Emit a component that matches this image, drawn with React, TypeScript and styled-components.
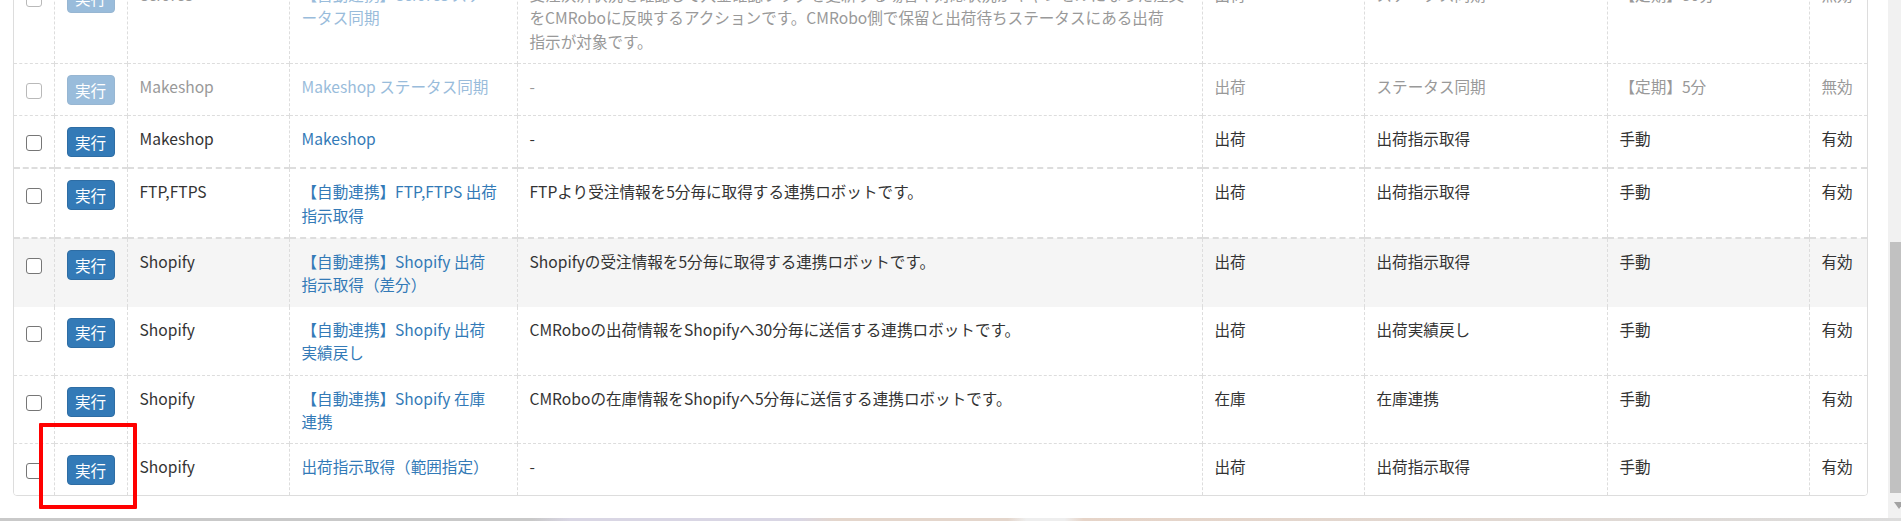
import React from 'react';
import styled, { createGlobalStyle, css } from 'styled-components';

const GlobalStyle = createGlobalStyle`
  html, body {
    margin: 0;
    padding: 0;
    background: #fff;
  }
  body {
    font-family: 'Noto Sans CJK JP', 'Noto Sans', sans-serif;
    color: #333;
  }
`;

const Screen = styled.div`
  position: relative;
  width: 1901px;
  height: 521px;
  display: flex;
  flex-direction: column;
  overflow: hidden;
`;

const Body = styled.div`
  display: flex;
  height: 518px;
`;

const Main = styled.main`
  flex: 1;
  min-width: 0;
  overflow: hidden;
  padding: 0 20px 0 13px;
`;

// the page is scrolled, so the first row is partly above the viewport
const Panel = styled.div`
  margin-top: -29px;
  border: 1px solid #ddd;
  border-radius: 4px;
  overflow: hidden;
  background: #fff;
`;

const Table = styled.table`
  width: 100%;
  table-layout: fixed;
  border-collapse: collapse;
  font-size: 15.6px;
  line-height: 23.4px;
`;

const Row = styled.tr<{ $hover?: boolean; $marked?: boolean }>`
  background: ${({ $hover }) => ($hover ? '#f5f5f5' : '#fff')};

  & + & > td {
    border-top: 1px dashed #ddd;
  }

  ${({ $marked }) =>
    $marked &&
    css`
      && > td {
        border-top: 2px dashed #ddd;
        border-bottom: 2px dashed #ddd;
      }
    `}
`;

const Cell = styled.td<{ $muted?: boolean }>`
  padding: 11px 12px 10px;
  vertical-align: top;
  color: ${({ $muted }) => ($muted ? '#999' : '#333')};
  white-space: nowrap;

  & + & {
    border-left: 1px dashed #ddd;
  }
`;

const Check = styled.input.attrs({ type: 'checkbox' })<{ $muted?: boolean }>`
  appearance: none;
  display: block;
  box-sizing: border-box;
  width: 16px;
  height: 16px;
  margin: 8px 0 0;
  border: 1.5px solid #767676;
  border-radius: 3px;
  background: #fff;
  opacity: ${({ $muted }) => ($muted ? 0.5 : 1)};
`;

const RunButton = styled.button<{ $muted?: boolean }>`
  display: block;
  box-sizing: border-box;
  width: 48px;
  height: 30px;
  padding: 0;
  border: 1px solid ${({ $muted }) => ($muted ? '#97b6d2' : '#2e6da4')};
  border-radius: 4px;
  background: ${({ $muted }) => ($muted ? '#99bcdb' : '#337ab7')};
  color: #fff;
  font-family: inherit;
  font-size: 15.6px;
  line-height: 27px;
  cursor: pointer;
`;

const NameLink = styled.a<{ $muted?: boolean }>`
  color: ${({ $muted }) => ($muted ? '#99bcdb' : '#337ab7')};
  text-decoration: none;
`;

const ScrollTrack = styled.div`
  width: 13px;
  background: #f1f1f1;
  display: flex;
  flex-direction: column;
  align-items: flex-end;
  overflow: hidden;
`;

const ScrollThumb = styled.div`
  width: 11px;
  height: 251px;
  margin-top: 242px;
  background: #c1c1c1;
`;

const ScrollArrow = styled.div`
  width: 0;
  height: 0;
  margin-top: 9px;
  margin-right: -3px;
  border-left: 5px solid transparent;
  border-right: 5px solid transparent;
  border-top: 7px solid #a3a3a3;
`;

const Taskbar = styled.div`
  height: 3px;
  background: linear-gradient(
    90deg,
    #c9c9c9 0%,
    #c9c9c9 28%,
    #d9d6e4 30%,
    #d9d6e4 42%,
    #e4d6cc 44%,
    #e4d6cc 53%,
    #eeeeee 54%,
    #eeeeee 56%,
    #e6d4c8 57%,
    #dcdcdc 100%
  );
`;

const Highlight = styled.div`
  position: absolute;
  left: 39px;
  top: 423px;
  width: 98px;
  height: 86px;
  box-sizing: border-box;
  border: 4px solid #ff0000;
  border-radius: 1px;
  pointer-events: none;
`;

interface Robot {
  platform: string;
  name: string[];
  desc: string[];
  type: string;
  kind: string;
  schedule: string;
  status: string;
  muted?: boolean;
  hover?: boolean;
  marked?: boolean;
}

const robots: Robot[] = [
  {
    platform: 'ecforce',
    name: ['【自動連携】ecforce ステ', 'ータス同期'],
    desc: [
      '受注決済状況を確認して入金確認フラグを更新する場合や対応状況がキャンセルになった注文',
      'をCMRoboに反映するアクションです。CMRobo側で保留と出荷待ちステータスにある出荷',
      '指示が対象です。',
    ],
    type: '出荷',
    kind: 'ステータス同期',
    schedule: '【定期】30分',
    status: '無効',
    muted: true,
  },
  {
    platform: 'Makeshop',
    name: ['Makeshop ステータス同期'],
    desc: ['-'],
    type: '出荷',
    kind: 'ステータス同期',
    schedule: '【定期】5分',
    status: '無効',
    muted: true,
  },
  {
    platform: 'Makeshop',
    name: ['Makeshop'],
    desc: ['-'],
    type: '出荷',
    kind: '出荷指示取得',
    schedule: '手動',
    status: '有効',
  },
  {
    platform: 'FTP,FTPS',
    name: ['【自動連携】FTP,FTPS 出荷', '指示取得'],
    desc: ['FTPより受注情報を5分毎に取得する連携ロボットです。'],
    type: '出荷',
    kind: '出荷指示取得',
    schedule: '手動',
    status: '有効',
    marked: true,
  },
  {
    platform: 'Shopify',
    name: ['【自動連携】Shopify 出荷', '指示取得（差分）'],
    desc: ['Shopifyの受注情報を5分毎に取得する連携ロボットです。'],
    type: '出荷',
    kind: '出荷指示取得',
    schedule: '手動',
    status: '有効',
    hover: true,
  },
  {
    platform: 'Shopify',
    name: ['【自動連携】Shopify 出荷', '実績戻し'],
    desc: ['CMRoboの出荷情報をShopifyへ30分毎に送信する連携ロボットです。'],
    type: '出荷',
    kind: '出荷実績戻し',
    schedule: '手動',
    status: '有効',
  },
  {
    platform: 'Shopify',
    name: ['【自動連携】Shopify 在庫', '連携'],
    desc: ['CMRoboの在庫情報をShopifyへ5分毎に送信する連携ロボットです。'],
    type: '在庫',
    kind: '在庫連携',
    schedule: '手動',
    status: '有効',
  },
  {
    platform: 'Shopify',
    name: ['出荷指示取得（範囲指定）'],
    desc: ['-'],
    type: '出荷',
    kind: '出荷指示取得',
    schedule: '手動',
    status: '有効',
  },
];

const colWidths = [40, 73, 162, 228, 685, 162, 243, 202, 58];

const Lines = ({ lines }: { lines: string[] }) => (
  <>
    {lines.map((line, i) => (
      <React.Fragment key={i}>
        {i > 0 && <br />}
        {line}
      </React.Fragment>
    ))}
  </>
);

const App = () => {
  return (
    <Screen>
      <GlobalStyle />
      <Body>
        <Main>
          <Panel>
            <Table>
              <colgroup>
                {colWidths.map((w, i) => (
                  <col key={i} style={{ width: w }} />
                ))}
              </colgroup>
              <tbody>
                {robots.map((r, i) => (
                  <Row key={i} $hover={r.hover} $marked={r.marked}>
                    <Cell>
                      <Check $muted={r.muted} readOnly />
                    </Cell>
                    <Cell>
                      <RunButton $muted={r.muted}>実行</RunButton>
                    </Cell>
                    <Cell $muted={r.muted}>{r.platform}</Cell>
                    <Cell>
                      <NameLink href="#" $muted={r.muted}>
                        <Lines lines={r.name} />
                      </NameLink>
                    </Cell>
                    <Cell $muted={r.muted}>
                      <Lines lines={r.desc} />
                    </Cell>
                    <Cell $muted={r.muted}>{r.type}</Cell>
                    <Cell $muted={r.muted}>{r.kind}</Cell>
                    <Cell $muted={r.muted}>{r.schedule}</Cell>
                    <Cell $muted={r.muted}>{r.status}</Cell>
                  </Row>
                ))}
              </tbody>
            </Table>
          </Panel>
        </Main>
        <ScrollTrack>
          <ScrollThumb />
          <ScrollArrow />
        </ScrollTrack>
      </Body>
      <Taskbar />
      <Highlight />
    </Screen>
  );
};

export default App;
